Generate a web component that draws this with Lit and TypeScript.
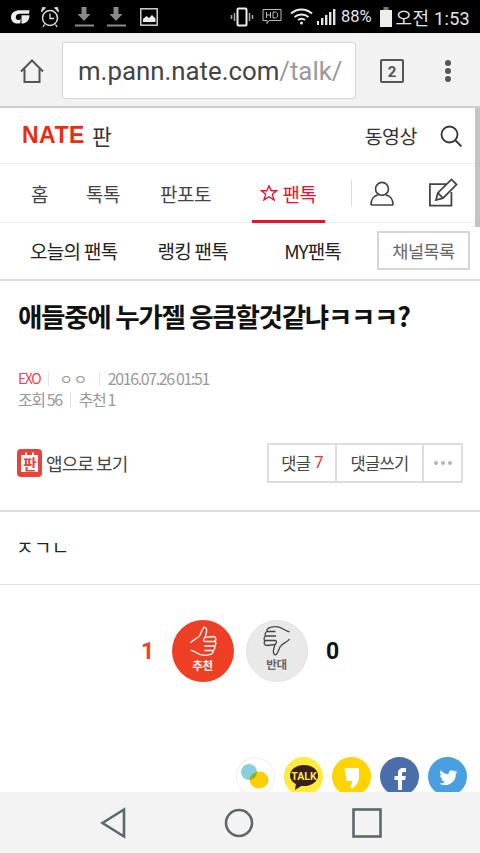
import { html, css, svg, LitElement } from 'lit';
import { customElement } from 'lit/decorators.js';

const thumb = svg`
  <path d="M1.500 17C4 13 9 13 11 9 12.500 6 13 3 15 1.200 17 1 18 3 17.500 6 17 8 16.500 10 16 11.500L24 10.500C27 10.500 27.500 13.500 26 15 27.500 16.500 27 19 25.500 20 26.500 21.500 25.500 24 24 24.500 24.500 26.500 23 28 21 28.500 16 30 11 29.500 7 26.500 5 25 3 25 1.500 24"/>
  <path d="M16 11.500C14 13 14 15 16 15.500H26M15 20H25.500M15.500 24.500H24"/>`;

@customElement('app-root')
export class AppRoot extends LitElement {
  static styles = css`
    :host {
      display: block;
      width: 480px;
      height: 853px;
      font-family: "Noto Sans CJK KR", Roboto, sans-serif;
      color: #333;
    }
    .screen {
      position: relative;
      width: 480px;
      height: 853px;
      display: flex;
      flex-direction: column;
      overflow: hidden;
      background: #fff;
    }
    svg { display: block; flex: none; }

    /* android status bar */
    .status {
      height: 33px;
      flex: none;
      background: #000;
      display: flex;
      align-items: center;
      padding: 0 10px;
      color: #e4e4e4;
    }
    .status .left { display: flex; align-items: center; gap: 11px; }
    .status .right { margin-left: auto; display: flex; align-items: center; }
    .status .pct { font: 400 16.5px Roboto, sans-serif; margin: 0 8px 0 5px; }
    .status .clock { font: 400 18px Roboto, "Noto Sans CJK KR", sans-serif; margin-left: 4px; letter-spacing: 0.3px; white-space: nowrap; }
    .status .hd { margin-left: 8px; }
    .status .wifi { margin-left: 8px; }
    .status .bars { margin-left: 3px; }
    .status .alarm { margin-left: -1px; }
    .status .dl { margin-left: 0; }
    .status .dl.first { margin-left: 3px; }
    .status .pic { margin-left: 2px; }

    /* browser chrome */
    .chrome {
      height: 75px;
      flex: none;
      box-sizing: border-box;
      background: #f2f2f2;
      border-bottom: 2px solid #ccc;
      display: flex;
      align-items: center;
      padding: 2px 0 0 20px;
    }
    .url {
      margin-left: 19px;
      width: 292px;
      height: 55px;
      box-sizing: border-box;
      background: #fff;
      border-radius: 2px;
      box-shadow: 0 0 1px 1px #d4d4d4;
      padding-left: 15px;
      display: flex;
      align-items: center;
      font: 400 25.8px Roboto, sans-serif;
      color: #444;
      white-space: nowrap;
      overflow: hidden;
    }
    .url span { color: #999; }
    .tabs-count { margin-left: 25px; }
    .dots { margin-left: 40px; }

    /* site header */
    .head {
      height: 56px;
      flex: none;
      box-sizing: border-box;
      border-bottom: 1px solid #eee;
      display: flex;
      align-items: center;
      padding: 0 18px 0 22px;
    }
    .logo {
      font: 700 23px "Liberation Sans", sans-serif;
      letter-spacing: 0.5px;
      color: #ec2c12;
      line-height: 1;
    }
    .pan { font-size: 21.5px; color: #333; margin-left: 7px; line-height: 1; }
    .video { margin-left: auto; font-size: 19.5px; letter-spacing: -0.5px; color: #333; line-height: 1; margin-right: 23px; }

    /* main nav */
    .nav {
      position: relative;
      height: 59px;
      flex: none;
      box-sizing: border-box;
      border-bottom: 1px solid #eee;
      display: flex;
      align-items: center;
      font-size: 19px;
      letter-spacing: -0.5px;
      color: #444;
      line-height: 1;
    }
    .nav .item { white-space: nowrap; }
    .nav .i1 { margin-left: 31px; }
    .nav .i2 { margin-left: 38px; }
    .nav .i3 { margin-left: 40px; }
    .nav .active {
      position: relative;
      margin-left: 41px;
      width: 73px;
      height: 58px;
      display: flex;
      align-items: center;
      justify-content: center;
      gap: 4px;
      color: #e8112d;
    }
    .nav .active::after {
      content: "";
      position: absolute;
      left: 0;
      right: 0;
      bottom: -1px;
      height: 3px;
      background: #e8112d;
    }
    .nav .sep { width: 1px; height: 26px; background: #ddd; margin-left: 26px; }
    .nav .user { margin-left: 18px; }
    .nav .edit { margin-left: 34px; margin-bottom: 2px; }

    /* sub nav */
    .sub {
      height: 58px;
      flex: none;
      box-sizing: border-box;
      border-bottom: 2px solid #ddd;
      display: flex;
      align-items: center;
      font-size: 19px;
      letter-spacing: -0.7px;
      color: #222;
      line-height: 1;
      padding-bottom: 1px;
    }
    .sub .a { margin-left: 30px; }
    .sub .b { margin-left: 40px; }
    .sub .c { margin-left: 56px; letter-spacing: -1px; }
    .sub .list {
      margin-left: auto;
      margin-right: 10px;
      width: 93px;
      height: 39px;
      box-sizing: border-box;
      border: 2px solid #d5d5d5;
      display: flex;
      align-items: center;
      justify-content: center;
      font-size: 17.5px;
      letter-spacing: -0.5px;
      color: #666;
    }

    /* article */
    h1 {
      margin: 17px 0 0 18px;
      font-size: 26.6px;
      line-height: 36px;
      font-weight: 700;
      letter-spacing: -1.35px;
      color: #111;
      white-space: nowrap;
    }
    .meta {
      margin: 34px 0 0 18px;
      font-size: 16px;
      line-height: 21px;
      letter-spacing: -1.4px;
      color: #999;
    }
    .meta .row { display: flex; align-items: center; white-space: nowrap; }
    .meta .bar { width: 1px; height: 14px; background: #e4e4e4; margin: 0 8px; }
    .meta .cat { color: #f0424a; font-size: 14px; }
    .meta .nick { font-size: 15px; letter-spacing: 0.5px; margin: 0 3px 0 2px; }
    .actions {
      margin: 33px 17px 0 17px;
      display: flex;
      align-items: center;
      justify-content: space-between;
    }
    .app { display: flex; align-items: center; gap: 4px; font-size: 18px; letter-spacing: -0.9px; color: #444; line-height: 1; }
    .btns {
      display: flex;
      height: 40px;
      box-sizing: border-box;
      border: 2px solid #ddd;
      font-size: 16.5px;
      letter-spacing: -0.7px;
      color: #444;
      line-height: 1;
    }
    .btns > div { display: flex; align-items: center; justify-content: center; box-sizing: border-box; }
    .btns .r { width: 68px; border-right: 2px solid #ddd; }
    .btns .w { width: 87px; border-right: 2px solid #ddd; }
    .btns .m { width: 37px; gap: 3px; }
    .btns .m i { width: 4px; height: 4px; border-radius: 50%; background: #b4b4b4; }
    .btns em { font-style: normal; color: #e5352b; margin-left: 4px; font-family: Roboto, sans-serif; }

    .body {
      margin-top: 27px;
      height: 75px;
      flex: none;
      box-sizing: border-box;
      border-top: 2px solid #ddd;
      border-bottom: 1px solid #e2e2e2;
      display: flex;
      align-items: center;
      padding: 0 0 3px 16px;
      font-size: 19px;
      letter-spacing: 0.4px;
      color: #222;
    }

    /* votes */
    .votes {
      margin-top: 35px;
      display: flex;
      align-items: center;
      justify-content: center;
    }
    .num { font: 700 23px Roboto, sans-serif; width: 14px; text-align: center; }
    .num.up { color: #f0402b; margin-right: 17px; }
    .num.down { color: #111; margin-left: 18px; }
    .vote {
      width: 62px;
      height: 62px;
      border-radius: 50%;
      display: flex;
      flex-direction: column;
      align-items: center;
      box-sizing: border-box;
      padding-top: 6px;
      font-size: 11.5px;
      line-height: 13px;
      font-weight: 700;
      letter-spacing: -0.3px;
    }
    .vote span { margin-top: 2px; }
    .vote.yes { background: #ee3f24; color: #fff; margin-right: 12px; }
    .vote.no { background: #e9e9e9; color: #666; border: 1px solid #e2e2e2; padding-top: 4px; }

    /* share row, cut off by the nav bar */
    .share {
      position: absolute;
      top: 757px;
      right: 13px;
      display: flex;
      gap: 9px;
    }
    .share .c { width: 39px; height: 39px; border-radius: 50%; overflow: hidden; }
    .share .band { background: #fff; box-shadow: inset 0 0 0 1px #eee; }
    .share .talk { background: #ffeb3b; }
    .share .story { background: #fdd400; }
    .share .fb { background: #4a6ea9; }
    .share .tw { background: #4a9fe0; }

    .scroll {
      position: absolute;
      top: 108px;
      right: 0;
      width: 5px;
      height: 119px;
      background: #c4c4c4;
    }

    .softkeys {
      position: absolute;
      left: 0;
      right: 0;
      bottom: 0;
      height: 61px;
      background: #f3f3f3;
      display: flex;
      align-items: center;
      padding: 0 98px 0 100px;
      justify-content: space-between;
    }
  `;

  render() {
    return html`<div class="screen">
      <div class="status">
        <div class="left">
          <svg width="20" height="16" viewBox="0 0 20 16"><path d="M10 1.200C5 1.200 1 3.800 1 8.200c0 4 3 6.400 6.800 6.400 1.200 0 2-.3 2.600-.7.3-2 .2-3.600.2-5.200 0 1.600-.8 2.400-2.200 2.400-1.500 0-2.600-1-2.600-2.800C5.800 5.900 7.600 4.800 10.500 4.800h8.300c.6-1.300.7-2.600.7-3.600z" fill="#eee"/><path d="M11.500 6.200h8c0 5-3 8.400-8 8.400z" fill="#eee"/></svg>
          <svg class="alarm" width="20" height="22" viewBox="0 0 20 22" fill="none" stroke="#ddd"><circle cx="10" cy="12" r="7.500" stroke-width="1.500"/><path d="M10 7.500V12.500H14" stroke-width="1.300"/><path d="M1.500 6 5.500 1.800 2.500 1.500zM18.500 6 14.500 1.800 17.500 1.500z" fill="#ddd" stroke-width="1"/><path d="M4.500 18.500 3 21M15.500 18.500 17 21" stroke-width="1.400"/></svg>
          <svg class="dl first" width="21" height="21" viewBox="0 0 21 21" fill="#8a8a8a"><path d="M7.500 1h5v7h4l-6.500 7-6.500-7h4z"/><rect x="1" y="18.500" width="19" height="2"/></svg>
          <svg class="dl" width="21" height="21" viewBox="0 0 21 21" fill="#8a8a8a"><path d="M7.500 1h5v7h4l-6.500 7-6.500-7h4z"/><rect x="1" y="18.500" width="19" height="2"/></svg>
          <svg class="pic" width="18" height="18" viewBox="0 0 18 18"><rect x=".8" y=".8" width="16.400" height="16.400" fill="none" stroke="#ddd" stroke-width="1.400"/><path d="M3 14v-3l3.500-3 2.500 2 3-3 3.500 3.500V14z" fill="#eee"/></svg>
        </div>
        <div class="right">
          <svg width="24" height="20" viewBox="0 0 24 20" fill="none" stroke="#eee" stroke-width="1.500"><rect x="7.500" y="1.500" width="9" height="17" rx="1" stroke-width="2"/><path d="M4.500 6v8M1.500 8v4M19.500 6v8M22.500 8v4" stroke="#aaa"/></svg>
          <svg class="hd" width="20" height="18" viewBox="0 0 20 18" fill="none" stroke="#bbb" stroke-width="1"><path d="M1 1.500h18v11H7l-2 3v-3H1z"/><path d="M4.500 4v6M8.500 4v6M4.500 7h4M11 4v6h2.500c3 0 3-6 0-6z"/></svg>
          <svg class="wifi" width="23" height="17" viewBox="0 0 23 17" fill="none" stroke="#eee" stroke-width="2"><path d="M1 5.500c6-5.500 15-5.500 21 0M4.500 9c4-3.500 10-3.500 14 0M8 12c2-1.500 5-1.500 7 0"/><circle cx="11.500" cy="15" r="1.500" fill="#eee" stroke="none"/></svg>
          <svg class="bars" width="20" height="18" viewBox="0 0 20 18" fill="#e4e4e4"><rect x="1" y="13" width="2" height="4"/><rect x="5" y="10" width="2.400" height="7"/><rect x="9" y="7" width="2.400" height="10"/><rect x="13" y="4" width="2.400" height="13"/><rect x="17" y="1" width="2.400" height="16"/></svg>
          <span class="pct">88%</span>
          <svg width="12" height="20" viewBox="0 0 12 20" fill="#eee"><rect x="0" y="3" width="12" height="17"/><rect x="3.500" y="0" width="5" height="3" fill="#777"/></svg>
          <span class="clock">오전 1:53</span>
        </div>
      </div>

      <div class="chrome">
        <svg width="24" height="24" viewBox="0 0 24 24" fill="none" stroke="#555" stroke-width="2"><path d="M1 12.500 12 1.500l11 11M4.500 10v13h15V10"/></svg>
        <div class="url">m.pann.nate.com<span>/talk/</span></div>
        <svg class="tabs-count" width="24" height="24" viewBox="0 0 24 24"><rect x="1" y="1" width="22" height="22" rx="1" fill="none" stroke="#555" stroke-width="2"/><text x="12" y="17.500" text-anchor="middle" font-family="Roboto, sans-serif" font-weight="700" font-size="15" fill="#555">2</text></svg>
        <svg class="dots" width="8" height="24" viewBox="0 0 8 24" fill="#555"><circle cx="4" cy="4" r="3"/><circle cx="4" cy="12" r="3"/><circle cx="4" cy="20" r="3"/></svg>
      </div>

      <div class="head">
        <span class="logo">NATE</span>
        <span class="pan">판</span>
        <span class="video">동영상</span>
        <svg width="22" height="22" viewBox="0 0 22 22" fill="none" stroke="#333" stroke-width="1.800"><circle cx="9.500" cy="9.500" r="8"/><path d="M15.500 15.500 21.500 21.500"/></svg>
      </div>

      <div class="nav">
        <span class="item i1">홈</span>
        <span class="item i2">톡톡</span>
        <span class="item i3">판포토</span>
        <div class="item active">
          <svg width="18" height="18" viewBox="0 0 20 19" fill="none" stroke="#e8112d" stroke-width="1.500"><path d="M10 1.500 12.500 7h6l-4.800 4 1.900 6.200L10 13.600l-5.600 3.600L6.300 11 1.500 7h6z"/></svg>
          <span>팬톡</span>
        </div>
        <span class="sep"></span>
        <svg class="user" width="24" height="25" viewBox="0 0 26 27" fill="none" stroke="#444" stroke-width="1.800"><circle cx="13" cy="8.500" r="7"/><path d="M1 26c0-7 4-10.500 8-11M25 26c0-7-4-10.500-8-11M1 26h24"/></svg>
        <svg class="edit" width="30" height="29" viewBox="0 0 31 31" fill="none" stroke="#444" stroke-width="1.900"><path d="M19 6.500H1.500V29.500H24.500V15"/><path d="M8 23.500 10 16 24.500 1.500 30 7 15.500 21.500z"/><path d="M10 16 15.500 21.500"/></svg>
      </div>

      <div class="sub">
        <span class="a">오늘의 팬톡</span>
        <span class="b">랭킹 팬톡</span>
        <span class="c">MY팬톡</span>
        <div class="list">채널목록</div>
      </div>

      <h1>애들중에 누가젤 응큼할것같냐ㅋㅋㅋ?</h1>

      <div class="meta">
        <div class="row"><span class="cat">EXO</span><i class="bar"></i><span class="nick">ㅇㅇ</span><i class="bar"></i><span>2016.07.26 01:51</span></div>
        <div class="row"><span>조회 56</span><i class="bar"></i><span>추천 1</span></div>
      </div>

      <div class="actions">
        <div class="app">
          <svg width="25" height="28" viewBox="0 0 25 28"><rect width="25" height="28" rx="4" fill="#e8433a"/><path d="M4 6h4V3.500h2V6h5V3.500h2V6h4v17H4z" fill="#fff"/><text x="12.500" y="20.500" text-anchor="middle" font-family="Noto Sans CJK KR, sans-serif" font-weight="700" font-size="15" fill="#e8433a">판</text></svg>
          <span>앱으로 보기</span>
        </div>
        <div class="btns">
          <div class="r">댓글<em>7</em></div>
          <div class="w">댓글쓰기</div>
          <div class="m"><i></i><i></i><i></i></div>
        </div>
      </div>

      <div class="body">ㅈㄱㄴ</div>

      <div class="votes">
        <span class="num up">1</span>
        <div class="vote yes">
          <svg width="28" height="31" viewBox="0 0 28 31" fill="none" stroke="#fff" stroke-width="1.300">${thumb}</svg>
          <span>추천</span>
        </div>
        <div class="vote no">
          <svg width="28" height="31" viewBox="0 0 28 31" fill="none" stroke="#444" stroke-width="1.300"><g transform="rotate(180 14 15.500)">${thumb}</g></svg>
          <span>반대</span>
        </div>
        <span class="num down">0</span>
      </div>

      <div class="share">
        <div class="c band">
          <svg width="39" height="39" viewBox="0 0 39 39">
            <defs><clipPath id="blue"><circle cx="13" cy="15" r="8"/></clipPath></defs>
            <circle cx="13" cy="15" r="8" fill="#86d1dd"/>
            <ellipse cx="23" cy="23" rx="9.500" ry="8.500" fill="#fcd000"/>
            <ellipse cx="23" cy="23" rx="9.500" ry="8.500" fill="#8fb32a" clip-path="url(#blue)"/>
          </svg>
        </div>
        <div class="c talk">
          <svg width="39" height="39" viewBox="0 0 39 39"><ellipse cx="20" cy="18.500" rx="14" ry="10.500" fill="#3a1d1d"/><path d="M12 26l-1 7 7-4.500z" fill="#3a1d1d"/><text x="20" y="22.500" text-anchor="middle" font-family="Roboto, sans-serif" font-weight="700" font-size="10.500" fill="#ffeb3b">TALK</text></svg>
        </div>
        <div class="c story">
          <svg width="39" height="39" viewBox="0 0 39 39"><path d="M12.500 11H27V20C27 25 24 29 20 31.500L18 30C19.500 28 20 26 20 24H14.500z" fill="#fff"/></svg>
        </div>
        <div class="c fb">
          <svg width="39" height="39" viewBox="0 0 39 39"><path d="M18 33V23h-3.500v-4H18v-3c0-3.500 2-5 5-5h3v4h-2c-1.300 0-2 .5-2 2v2h3.800l-.6 4H22v10z" fill="#fff"/></svg>
        </div>
        <div class="c tw">
          <svg width="39" height="39" viewBox="0 0 39 39"><g transform="translate(4.500 4.500) scale(.77)"><path d="M32 13.500c-1 .5-2 .7-3 .8 1-.6 2-1.600 2.300-2.800-1 .6-2 1-3.200 1.300-2.500-2.800-8-1-7 3.800-4-.2-8-2.200-10.500-5.300-1.300 2.300-.6 5.300 1.500 6.800-.8 0-1.600-.2-2.300-.6 0 2.500 1.700 4.700 4.100 5.200-.8.2-1.500.2-2.300.1.700 2.100 2.600 3.500 4.800 3.600-2.200 1.700-4.800 2.400-7.500 2.100 7 4.500 21.500 1.700 21.500-12.700 1-.7 1.800-1.400 2.600-2.100z" fill="#fff"/></g></svg>
        </div>
      </div>

      <div class="scroll"></div>

      <div class="softkeys">
        <svg width="26" height="32" viewBox="0 0 26 32" fill="none" stroke="#5a6870" stroke-width="2.600"><path d="M24 2.500V29.500L2.500 16z"/></svg>
        <svg width="30" height="30" viewBox="0 0 30 30" fill="none" stroke="#5a6870" stroke-width="2.600"><circle cx="15" cy="15" r="13"/></svg>
        <svg width="30" height="30" viewBox="0 0 30 30" fill="none" stroke="#5a6870" stroke-width="2.600"><rect x="1.500" y="1.500" width="27" height="27"/></svg>
      </div>
    </div>`;
  }
}
